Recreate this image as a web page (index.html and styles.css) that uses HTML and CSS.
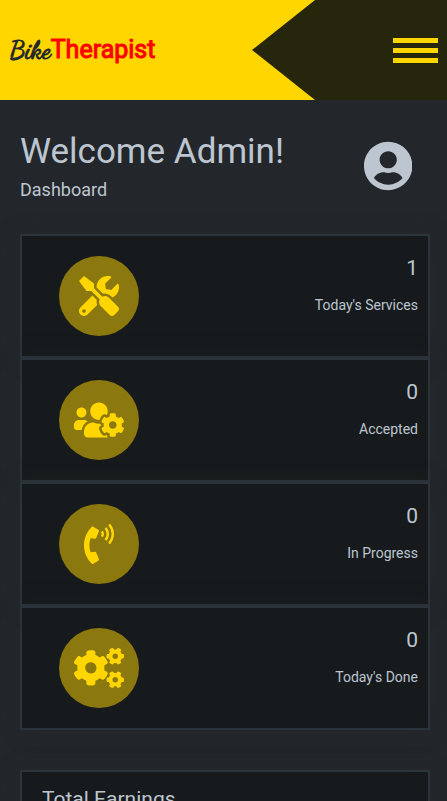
FILE: index.html
```html
<!DOCTYPE html>
<html lang="en">
<head>
<meta charset="utf-8">
<meta name="viewport" content="width=device-width, initial-scale=1">
<title>BikeTherapist</title>
<link rel="stylesheet" href="styles.css">
</head>
<body>
<header class="topbar">
  <a class="brand" href="#"><span class="brand-script">Bike</span><span class="brand-name">Therapist</span></a>
  <div class="topbar-side">
    <button class="menu-button" type="button" aria-label="Menu"><span></span><span></span><span></span></button>
  </div>
</header>
<main class="page">
  <section class="welcome">
    <div>
      <h1>Welcome Admin!</h1>
      <p>Dashboard</p>
    </div>
    <a class="profile" href="#" aria-label="Profile">
      <svg viewBox="0 0 496 512"><path d="M248 8C111 8 0 119 0 256s111 248 248 248 248-111 248-248S385 8 248 8zm0 96c48.6 0 88 39.4 88 88s-39.4 88-88 88-88-39.4-88-88 39.4-88 88-88zm0 344c-58.7 0-111.3-26.6-146.5-68.2 18.8-35.4 55.6-59.8 98.5-59.8 2.4 0 4.8.4 7.1 1.1 13 4.2 26.6 6.9 40.9 6.9 14.3 0 28-2.7 40.9-6.9 2.3-.7 4.7-1.1 7.1-1.1 42.9 0 79.7 24.4 98.5 59.8C359.3 421.4 306.7 448 248 448z"/></svg>
    </a>
  </section>
  <section class="stats">
    <article class="card stat">
      <div class="stat-icon">
        <svg viewBox="0 0 512 512"><path d="M501.1 395.7L384 278.6c-23.1-23.1-57.6-27.6-85.4-13.9L192 158.1V96L64 0 0 64l96 128h62.1l106.6 106.6c-13.6 27.8-9.2 62.3 13.9 85.4l117.1 117.1c14.6 14.6 38.2 14.6 52.7 0l52.7-52.7c14.5-14.6 14.5-38.2 0-52.7zM331.7 225c28.3 0 54.9 11 74.9 31l19.4 19.4c15.8-6.9 30.8-16.5 43.8-29.5 37.1-37.1 49.7-89.3 37.9-136.7-2.2-9-13.5-12.1-20.1-5.5l-74.4 74.4-67.9-11.3L334 98.9l74.4-74.4c6.6-6.6 3.4-17.9-5.7-20.2-47.4-11.7-99.6.9-136.6 37.9-28.5 28.5-41.9 66.1-41.2 103.6l82.1 82.1c8.1-1.9 16.5-2.9 24.7-2.9zm-103.9 82l-56.7-56.7L18.7 402.8c-25 25-25 65.5 0 90.5s65.5 25 90.5 0l123.6-123.6c-7.6-19.9-9.9-41.6-5-62.7zM64 472c-13.2 0-24-10.8-24-24 0-13.3 10.7-24 24-24s24 10.7 24 24c0 13.2-10.7 24-24 24z"/></svg>
      </div>
      <div class="stat-text"><h2>1</h2><p>Today's Services</p></div>
    </article>
    <article class="card stat">
      <div class="stat-icon">
        <svg viewBox="0 0 640 512"><path d="M610.5 341.3c2.6-14.1 2.6-28.5 0-42.6l25.8-14.9c3-1.7 4.3-5.2 3.3-8.5-6.7-21.6-18.2-41.2-33.2-57.4-2.3-2.5-6-3.1-9-1.4l-25.8 14.9c-10.9-9.3-23.4-16.5-36.9-21.3v-29.8c0-3.4-2.4-6.4-5.7-7.1-22.3-5-45-4.8-66.2 0-3.3.7-5.7 3.7-5.7 7.1v29.8c-13.5 4.8-26 12-36.9 21.3l-25.8-14.9c-2.9-1.7-6.7-1.1-9 1.4-15 16.2-26.5 35.8-33.2 57.4-1 3.3.4 6.8 3.3 8.5l25.8 14.9c-2.6 14.1-2.6 28.5 0 42.6l-25.8 14.9c-3 1.7-4.3 5.2-3.3 8.5 6.7 21.6 18.2 41.1 33.2 57.4 2.3 2.5 6 3.1 9 1.4l25.8-14.9c10.9 9.3 23.4 16.5 36.9 21.3v29.8c0 3.4 2.4 6.4 5.7 7.1 22.3 5 45 4.8 66.2 0 3.3-.7 5.7-3.7 5.7-7.1v-29.8c13.5-4.8 26-12 36.9-21.3l25.8 14.9c2.9 1.7 6.7 1.1 9-1.4 15-16.2 26.5-35.8 33.2-57.4 1-3.3-.4-6.8-3.3-8.5l-25.8-14.9zM496 368.5c-26.8 0-48.5-21.8-48.5-48.5s21.8-48.5 48.5-48.5 48.5 21.8 48.5 48.5-21.7 48.5-48.5 48.5zM96 224c35.3 0 64-28.7 64-64s-28.7-64-64-64-64 28.7-64 64 28.7 64 64 64zm224 32c1.9 0 3.7-.5 5.6-.6 8.3-21.7 20.5-42.1 36.3-59.2 7.4-8 17.9-12.6 28.9-12.6 6.9 0 13.7 1.8 19.6 5.3l7.9 4.6c.8-.5 1.6-.9 2.4-1.4 7-14.6 11.2-30.8 11.2-48 0-61.9-50.1-112-112-112S208 82.1 208 144c0 61.9 50.1 112 112 112zm105.2 194.5c-2.3-1.2-4.6-2.6-6.8-3.9-8.2 4.8-15.3 9.8-27.5 9.8-10.9 0-21.4-4.6-28.9-12.6-18.3-19.8-32.3-43.9-40.2-69.6-10.7-34.5 24.9-49.7 25.8-50.3-.1-2.6-.1-5.2 0-7.8l-7.9-4.6c-3.8-2.2-7-5-9.8-8.1-3.3.2-6.5.6-9.8.6-24.6 0-47.6-6-68.5-16h-8.3C179.6 288 128 339.6 128 403.2V432c0 26.5 21.5 48 48 48h255.4c-3.7-6-6.2-12.8-6.2-20.3v-9.2zM173.1 274.6C161.5 263.1 145.6 256 128 256H64c-35.3 0-64 28.7-64 64v32c0 17.7 14.3 32 32 32h65.9c6.3-47.4 34.9-87.3 75.2-109.4z"/></svg>
      </div>
      <div class="stat-text"><h2>0</h2><p>Accepted</p></div>
    </article>
    <article class="card stat">
      <div class="stat-icon">
        <svg viewBox="0 0 384 512"><path d="M97.333 506.966c-129.874-129.874-129.681-340.252 0-469.933 5.698-5.698 14.527-6.632 21.263-2.422l64.817 40.513a17.187 17.187 0 0 1 6.849 20.958l-32.408 81.021a17.188 17.188 0 0 1-17.669 10.719l-55.81-5.58c-21.051 58.261-20.612 122.471 0 179.515l55.811-5.581a17.188 17.188 0 0 1 17.669 10.719l32.408 81.022a17.188 17.188 0 0 1-6.849 20.958l-64.817 40.513a17.19 17.19 0 0 1-21.264-2.422zM247.126 95.473c11.832 20.047 11.832 45.008 0 65.055-3.95 6.693-13.108 7.959-18.718 2.581l-5.975-5.726c-3.911-3.748-4.793-9.622-2.261-14.41a32.063 32.063 0 0 0 0-29.945c-2.533-4.788-1.65-10.662 2.261-14.41l5.975-5.726c5.61-5.378 14.768-4.112 18.718 2.581zm91.787-91.187c60.14 71.604 60.092 175.882 0 247.428-4.474 5.327-12.53 5.746-17.552.933l-5.798-5.557c-4.56-4.371-4.977-11.529-.93-16.379 49.687-59.538 49.646-145.933 0-205.422-4.047-4.85-3.631-12.008.93-16.379l5.798-5.557c5.022-4.813 13.078-4.394 17.552.933zm-45.972 44.941c36.05 46.322 36.108 111.149 0 157.546-4.39 5.641-12.697 6.251-17.856 1.304l-5.818-5.579c-4.4-4.219-4.998-11.095-1.285-15.931 26.536-34.564 26.534-82.572 0-117.134-3.713-4.836-3.115-11.711 1.285-15.931l5.818-5.579c5.159-4.947 13.466-4.337 17.856 1.304z"/></svg>
      </div>
      <div class="stat-text"><h2>0</h2><p>In Progress</p></div>
    </article>
    <article class="card stat">
      <div class="stat-icon">
        <svg viewBox="0 0 640 512"><path id="small-gear" d="M512.1 191l-8.2 14.3c-3 5.3-9.4 7.5-15.1 5.4-11.8-4.4-22.6-10.7-32.1-18.6-4.6-3.8-5.8-10.5-2.8-15.7l8.2-14.3c-6.9-8-12.3-17.3-15.9-27.4h-16.5c-6 0-11.2-4.3-12.2-10.3-2-12-2.1-24.6 0-37.1 1-6 6.2-10.4 12.2-10.4h16.5c3.6-10.1 9-19.4 15.9-27.4l-8.2-14.3c-3-5.2-1.9-11.9 2.8-15.7 9.5-7.9 20.4-14.2 32.1-18.6 5.7-2.1 12.1.1 15.1 5.4l8.2 14.3c10.5-1.9 21.2-1.9 31.7 0L552 6.3c3-5.3 9.4-7.5 15.1-5.4 11.8 4.4 22.6 10.7 32.1 18.6 4.6 3.8 5.8 10.5 2.8 15.7l-8.2 14.3c6.9 8 12.3 17.3 15.9 27.4h16.5c6 0 11.2 4.3 12.2 10.3 2 12 2.1 24.6 0 37.1-1 6-6.2 10.4-12.2 10.4h-16.5c-3.6 10.1-9 19.4-15.9 27.4l8.2 14.3c3 5.2 1.9 11.9-2.8 15.7-9.5 7.9-20.4 14.2-32.1 18.6-5.7 2.1-12.1-.1-15.1-5.4l-8.2-14.3c-10.4 1.9-21.2 1.9-31.7 0zm-10.5-58.8c38.5 29.6 82.4-14.3 52.8-52.8-38.5-29.7-82.4 14.3-52.8 52.8z"/><use href="#small-gear" y="300"/><path d="M386.3 286.1l33.7 16.8c10.1 5.8 14.5 18.1 10.5 29.1-8.9 24.2-26.4 46.4-42.6 65.8-7.4 8.9-20.2 11.1-30.3 5.3l-29.1-16.8c-16 13.7-34.6 24.6-54.9 31.7v33.6c0 11.6-8.3 21.6-19.7 23.6-24.6 4.2-50.4 4.4-75.9 0-11.5-2-20-11.9-20-23.6V418c-20.3-7.2-38.9-18-54.9-31.7L74 403c-10 5.8-22.9 3.6-30.3-5.3-16.2-19.4-33.3-41.6-42.2-65.7-4-10.9.4-23.2 10.5-29.1l33.3-16.8c-3.9-20.9-3.9-42.4 0-63.4L12 205.8c-10.1-5.8-14.6-18.1-10.5-29 8.9-24.2 26-46.4 42.2-65.8 7.4-8.9 20.2-11.1 30.3-5.3l29.1 16.8c16-13.7 34.6-24.6 54.9-31.7V57.1c0-11.5 8.2-21.5 19.6-23.5 24.6-4.2 50.5-4.4 76-.1 11.5 2 20 11.9 20 23.6v33.6c20.3 7.2 38.9 18 54.9 31.7l29.1-16.8c10-5.8 22.9-3.6 30.3 5.3 16.2 19.4 33.2 41.6 42.1 65.8 4 10.9.1 23.2-10 29.1l-33.7 16.8c3.9 21 3.9 42.5 0 63.5zm-117.6 21.1c59.2-77-28.7-164.9-105.7-105.7-59.2 77 28.7 164.9 105.7 105.7z"/></svg>
      </div>
      <div class="stat-text"><h2>0</h2><p>Today's Done</p></div>
    </article>
  </section>
  <section class="card earnings">
    <h2>Total Earnings</h2>
  </section>
</main>
</body>
</html>
```
FILE: styles.css
```css
* {
  box-sizing: border-box;
}

body {
  height: 100vh;
  margin: 0;
  overflow-y: auto;
  scrollbar-width: none;
  background: #23272b;
  color: #bdc6d0;
  font-family: Roboto, sans-serif;
}

h1, h2, p {
  margin: 0;
  font-weight: 400;
}

.topbar {
  display: flex;
  justify-content: space-between;
  align-items: stretch;
  height: 100px;
  background: #ffd600;
}

.brand {
  display: flex;
  align-items: center;
  padding-left: 10px;
  font-size: 25px;
  line-height: 30px;
  color: #23272b;
  text-decoration: none;
}

.brand-script {
  font-family: "Dancing Script", cursive;
  -webkit-text-stroke: 1px #23272b;
}

.brand-name {
  color: #ff0000;
  -webkit-text-stroke: 1px #ff0000;
}

.topbar-side {
  display: flex;
  align-items: center;
  justify-content: flex-end;
  width: 195px;
  padding-right: 9px;
  background: #26260d;
  clip-path: polygon(63px 0, 100% 0, 100% 100%, 63px 100%, 0 50%);
}

.menu-button {
  display: flex;
  flex-direction: column;
  gap: 5px;
  width: 45px;
  padding: 0;
  border: 0;
  background: none;
}

.menu-button span {
  height: 5px;
  background: #ffd600;
}

.page {
  padding: 30px 17px 20px 20px;
}

.welcome {
  display: flex;
  justify-content: space-between;
  align-items: center;
  margin-bottom: 32px;
  padding-right: 18px;
}

.welcome h1 {
  font-size: 35px;
  line-height: 44px;
}

.welcome p {
  margin-top: 4px;
  font-size: 18px;
  line-height: 24px;
}

.profile svg {
  display: block;
  height: 50px;
  fill: #bdc6d0;
}

.card {
  border: 2px solid #2b343b;
  background: #171a1c;
  box-shadow: 0 0 20px rgba(40, 40, 40, 0.4);
}

.stat {
  display: flex;
  justify-content: space-between;
  height: 124px;
  padding: 20px 10px 20px 37px;
}

.stat-icon {
  display: flex;
  align-items: center;
  justify-content: center;
  width: 80px;
  height: 80px;
  border-radius: 50%;
  background: #8b780e;
}

.stat-icon svg {
  height: 40px;
  fill: #ffd600;
}

.stat-text {
  text-align: right;
}

.stat-text h2 {
  font-size: 21px;
  line-height: 24px;
}

.stat-text p {
  margin-top: 16px;
  font-size: 14px;
  line-height: 18px;
}

.earnings {
  min-height: 200px;
  margin-top: 40px;
  padding: 15px 20px;
}

.earnings h2 {
  font-size: 21px;
  line-height: 24px;
}
```
